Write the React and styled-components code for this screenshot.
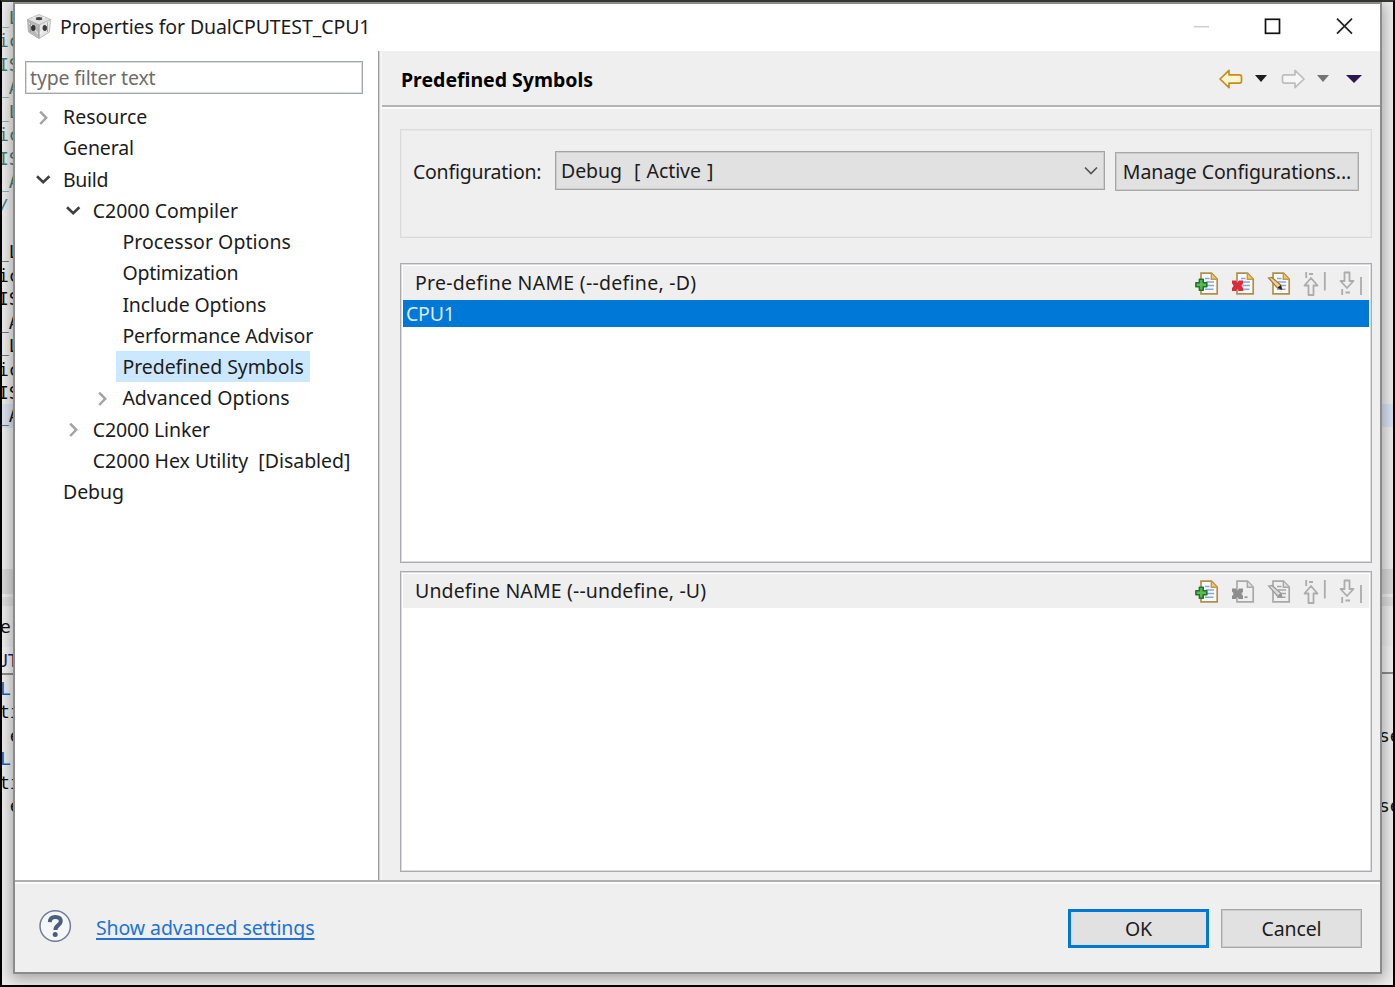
import React, { useState } from "react";
import styled, { createGlobalStyle } from "styled-components";

const GlobalStyle = createGlobalStyle`
  * {
    box-sizing: border-box;
  }
  body {
    margin: 0;
    overflow: hidden;
    font-family: "Noto Sans", "Open Sans", sans-serif;
    font-size: 19.5px;
    color: #1c1c1c;
  }
  button, input {
    font: inherit;
    color: inherit;
  }
`;

const Desktop = styled.div`
  width: 1395px;
  height: 987px;
  display: flex;
  border: 2px solid #000;
  border-top-color: #34352e;
  background: #eeeeee;
  overflow: hidden;
`;

/* Slices of the editor and console behind the dialog */
const Strip = styled.div`
  width: 11px;
  height: 983px;
  flex: none;
`;
const CodeLine = styled.div`
  height: ${(p) => p.$h || 23.45}px;
  line-height: ${(p) => p.$h || 23.45}px;
  width: 13px;
  overflow: hidden;
  white-space: pre;
  font-family: "DejaVu Sans Mono", monospace;
  font-size: 18px;
  font-weight: ${(p) => (p.$bold ? 700 : 400)};
  text-indent: ${(p) => p.$indent ?? -4}px;
  color: ${(p) => p.$color || "#111"};
  background: ${(p) => p.$bg || "transparent"};
  border-bottom: ${(p) => (p.$line ? "2px solid #8d8d8d" : "none")};
`;

const Dialog = styled.div`
  position: relative;
  width: 1369px;
  height: 972px;
  flex: none;
  display: flex;
  flex-direction: column;
  border: 2px solid #8b8b8b;
  background: #efefef;
  box-shadow: 0 3px 14px 2px rgba(0, 0, 0, 0.32);
`;

const TitleBar = styled.div`
  height: 47px;
  display: flex;
  align-items: center;
  padding: 0 27px 3px 12px;
  background: #fff;
`;
const Title = styled.div`
  flex: 1;
  margin-left: 9px;
  letter-spacing: -0.1px;
  white-space: nowrap;
`;
const Controls = styled.div`
  display: flex;
  gap: 55px;
  height: 17px;
`;

const Main = styled.div`
  display: flex;
  height: 829px;
`;
const Sidebar = styled.div`
  width: 365px;
  background: #fff;
  border-right: 1px solid #9c9c9c;
  box-shadow: 1px 0 0 #d2d2d2;
  padding: 10px 0 0 10px;
`;
const FilterInput = styled.input`
  display: block;
  width: 338px;
  height: 33px;
  padding: 0 4px;
  border: 1px solid #a4a6ad;
  box-shadow: inset 0 0 0 1px #dcdde0;
  outline: none;
  letter-spacing: -0.16px;
  &::placeholder {
    color: #6d6d6d;
    opacity: 1;
  }
`;
const Tree = styled.div`
  padding-top: 6.9px;
`;
const TreeRow = styled.div`
  height: 31.25px;
  display: flex;
  align-items: center;
  padding-left: ${(p) => 9 + p.$level * 29.7}px;
  cursor: default;
`;
const Twisty = styled.div`
  width: 18px;
  height: 18px;
  margin-right: 5px;
  display: flex;
`;
const TreeLabel = styled.div`
  height: 31px;
  line-height: 31px;
  padding: 0 6px;
  white-space: pre;
  letter-spacing: ${(p) => p.$ls || 0}px;
  background: ${(p) => (p.$selected ? "#cce8ff" : "transparent")};
`;

const Page = styled.div`
  flex: 1;
  margin-left: 2px;
  border-left: 1px solid #f8f8f8;
  display: flex;
  flex-direction: column;
`;
const PageHeader = styled.div`
  height: 56px;
  padding: 0 18px 0 18px;
  display: flex;
  align-items: center;
  justify-content: space-between;
  border-bottom: 2px solid #b4b4b4;
  box-shadow: 0 2px 0 #fbfbfb;
`;
const PageTitle = styled.div`
  font-weight: 700;
  color: #000;
  padding: 3px 0 0 1px;
`;
const NavTools = styled.div`
  display: flex;
  align-items: center;
  padding-top: 1px;
`;
const PageBody = styled.div`
  padding: 22px 8px 0 18px;
`;
const ConfigGroup = styled.div`
  height: 109px;
  padding: 21px 12px 0 12px;
  display: flex;
  align-items: flex-start;
  border: 1px solid #dadada;
  box-shadow: inset 0 0 0 1px #e9e9e9;
  margin-bottom: 25px;
`;
const ConfigLabel = styled.div`
  width: 142px;
  flex: none;
  line-height: 42px;
  white-space: nowrap;
  letter-spacing: -0.25px;
`;
const Combo = styled.div`
  width: 550px;
  flex: none;
  height: 39px;
  margin-right: 10px;
  padding: 0 5px 1px 5px;
  display: flex;
  align-items: center;
  justify-content: space-between;
  background: #e1e1e1;
  border: 1px solid #a4a4a4;
  box-shadow: inset 0 0 0 1px #cccccc;
  white-space: pre;
  word-spacing: 1.2px;
  letter-spacing: -0.1px;
`;
const Button = styled.button`
  width: ${(p) => p.$w}px;
  height: 39px;
  flex: none;
  padding: 0;
  margin-top: ${(p) => p.$mt || 0}px;
  background: #e1e1e1;
  border: ${(p) => (p.$primary ? "3px solid #0078d7" : "1px solid #a8a8a8")};
  box-shadow: ${(p) => (p.$primary ? "none" : "inset 0 0 0 1px #cbcbcb")};
  white-space: nowrap;
  letter-spacing: -0.12px;
`;

const ListBox = styled.div`
  height: ${(p) => p.$h}px;
  margin-bottom: 8px;
  padding: 2px;
  border: 1px solid #a9aab2;
  box-shadow: inset 0 0 0 1px #dcdce0;
  background: #fff;
`;
const ListHeader = styled.div`
  height: 34px;
  padding: 0 6px 0 12px;
  display: flex;
  align-items: center;
  justify-content: space-between;
  background: #efefef;
`;
const ListTitle = styled.div`
  margin-top: -2px;
  white-space: nowrap;
  letter-spacing: ${(p) => p.$ls || 0}px;
`;
const ListTools = styled.div`
  display: flex;
  align-items: center;
  gap: 12px;
`;
const ListItem = styled.div`
  height: 27px;
  line-height: 27px;
  padding-left: 3px;
  color: #dcebfa;
  background: #0078d7;
  letter-spacing: -0.2px;
`;

const Footer = styled.div`
  flex: 1;
  display: flex;
  align-items: center;
  padding: 0 18px 2px 24px;
  border-top: 2px solid #b0b0b0;
  box-shadow: inset 0 2px 0 #fbfbfb;
`;
const Link = styled.a`
  flex: 1;
  margin-left: 24px;
  padding-top: 3px;
  color: #1d74d4;
  text-decoration: underline;
  text-decoration-thickness: 2px;
  text-underline-offset: 3px;
  text-decoration-skip-ink: none;
  letter-spacing: -0.1px;
`;
const FooterButtons = styled.div`
  display: flex;
  gap: 12px;
  padding-top: 4px;
`;

const AppIcon = () => (
  <svg width="24" height="25" viewBox="0 0 24 25">
    <path d="M12 0.5 23.5 5.5 12 11 0.5 5.5z" fill="#e2e2e2" stroke="#c2c2c2" />
    <path d="M0.5 5.5 12 11V24.5L1.5 18z" fill="#b9b9b9" stroke="#b0b0b0" />
    <path d="M23.5 5.5 12 11V24.5L22.5 18z" fill="#e6e6e6" stroke="#bdbdbd" />
    <ellipse cx="12" cy="4.6" rx="3.6" ry="1.7" fill="#444" />
    <ellipse cx="6.3" cy="14" rx="2.2" ry="3" fill="#333" />
    <ellipse cx="17.8" cy="14" rx="2.2" ry="3" fill="#3c3c3c" />
    <path
      d="M6 3.2 9 4.8M18 3.2 15 4.8M2 9 5 12M8 16 11 20M22 9 19 12M16 16 13 20"
      fill="none"
      stroke="#fff"
      strokeOpacity="0.75"
      strokeWidth="1"
    />
    <path d="M12 11V24M3.5 8.5V18M20.5 8.5V18" stroke="#8f8f8f" strokeWidth="0.7" />
  </svg>
);

const Chevron = ({ open }) => (
  <svg width="18" height="18" viewBox="0 0 18 18" fill="none">
    {open ? (
      <path d="M3 6.3 9.2 12.2 15.4 6.3" stroke="#404040" strokeWidth="2.6" />
    ) : (
      <path d="M6.2 3.6 12.2 9.8 6.2 16" stroke="#a3a3a3" strokeWidth="2.5" />
    )}
  </svg>
);

const NavArrow = ({ back }) => (
  <svg width="24" height="20" viewBox="0 0 24 20">
    <path
      d={
        back
          ? "M1 10 10 1.3V5.8H20.5Q22.5 5.8 22.5 8V12Q22.5 14.2 20.5 14.2H10V18.7z"
          : "M23 10 14 1.3V5.8H3.5Q1.5 5.8 1.5 8V12Q1.5 14.2 3.5 14.2H14V18.7z"
      }
      fill={back ? "#fff6cf" : "#f6f6f6"}
      stroke={back ? "#c98a1e" : "#bdbdbd"}
      strokeWidth="1.7"
      strokeLinejoin="round"
    />
  </svg>
);

const Caret = styled.div`
  width: 0;
  height: 0;
  margin-left: ${(p) => p.$ml}px;
  margin-right: ${(p) => p.$mr || 0}px;
  border-left: ${(p) => p.$w || 6}px solid transparent;
  border-right: ${(p) => p.$w || 6}px solid transparent;
  border-top: ${(p) => p.$h || 7}px solid ${(p) => p.$color};
`;

/* Document page shared by the add, delete and edit icons */
const Paper = ({ disabled, dots }) => (
  <>
    <path
      d="M6 1.2H16.5L22.2 7V21.8H6z"
      fill={disabled ? "#f0f0f0" : "#f7fafe"}
      stroke={disabled ? "#a9a9a9" : "#b39048"}
      strokeWidth="1.7"
    />
    <path
      d="M16.3 1.5V7.2H22"
      fill={disabled ? "#dcdcdc" : "#e9c978"}
      stroke={disabled ? "#a9a9a9" : "#c79c3c"}
      strokeWidth="1.4"
    />
    {!dots && (
      <path
        d="M10 6.5H14.5M11 10H19M12 13.5H19M10 17.3H18.5"
        stroke={disabled ? "#a5a5a5" : "#8ba6d6"}
        strokeWidth="1.5"
      />
    )}
  </>
);

const AddIcon = () => (
  <svg width="24" height="23" viewBox="0 0 24 23">
    <Paper />
    <path
      d="M4.4 7.2H8.2V10.8H11.8V14.8H8.2V18.3H4.4V14.8H0.9V10.8H4.4z"
      fill="#5dba4b"
      stroke="#1f7430"
      strokeWidth="1.6"
      strokeLinejoin="round"
    />
  </svg>
);
const DeleteIcon = ({ disabled }) => (
  <svg width="24" height="23" viewBox="0 0 24 23">
    <Paper disabled={disabled} dots={disabled} />
    <rect x="2" y="9" width="9.5" height="10" fill={disabled ? "#c4c4c4" : "#e88a92"} />
    <path
      d="M1 8.5H5L6.5 10.8 8 8.5H12V11.5L10 13.7 12 16V19H8L6.5 16.8 5 19H1V16L3 13.7 1 11.5z"
      fill={disabled ? "#8d8d8d" : "#d92b3c"}
    />
    {disabled && <path d="M13.5 17.2H16.5" stroke="#999" strokeWidth="1.8" />}
  </svg>
);
const EditIcon = ({ disabled }) => (
  <svg width="24" height="23" viewBox="0 0 24 23">
    <Paper disabled={disabled} />
    <path
      d="M1.5 6 5 5.5 14 13.2 14.8 17.2 10.6 16.2z"
      fill={disabled ? "#d8d8d8" : "#f3cf8c"}
      stroke={disabled ? "#999" : "#a0763a"}
      strokeWidth="1.2"
    />
    <path d="M10.5 15.5 15 18 13.8 13z" fill={disabled ? "#999" : "#222"} />
  </svg>
);
const MoveIcon = ({ down }) => (
  <svg width="24" height="25" viewBox="0 0 24 25" fill="none" stroke="#acacac" strokeWidth="1.8">
    {down ? (
      <>
        <path d="M5.5 1.5H10.5V10H14.5L8 17 1.5 10H5.5z" strokeLinejoin="round" />
        <path d="M3.2 18V24M6.5 21.5H11M22 6V24" />
      </>
    ) : (
      <>
        <path d="M5.5 24H10.5V14.5H14.5L8 7 1.5 14.5H5.5z" strokeLinejoin="round" />
        <path d="M3.2 1V7M6 3H10M21.8 1V19.5" />
      </>
    )}
  </svg>
);

const HelpIcon = () => (
  <svg width="33" height="33" viewBox="0 0 33 33" fill="none">
    <circle cx="16.2" cy="16" r="15.2" fill="#f5f6f8" stroke="#6f7d96" strokeWidth="1.5" />
    <path
      d="M10.8 12.1C11 8.3 13.3 6.9 16.2 6.9C19.7 6.9 21.8 8.5 21.8 11.3C21.8 15.1 16.4 15.3 16.4 19.9"
      stroke="#4c5d7e"
      strokeWidth="4"
    />
    <circle cx="16.2" cy="24.5" r="2.5" fill="#4c5d7e" />
  </svg>
);

const TREE = [
  { label: "Resource", level: 0, twisty: "closed" },
  { label: "General", level: 0, ls: -0.15 },
  { label: "Build", level: 0, twisty: "open", ls: -0.35 },
  { label: "C2000 Compiler", level: 1, twisty: "open" },
  { label: "Processor Options", level: 2, ls: 0.05 },
  { label: "Optimization", level: 2, ls: -0.22 },
  { label: "Include Options", level: 2, ls: -0.13 },
  { label: "Performance Advisor", level: 2, ls: -0.1 },
  { label: "Predefined Symbols", level: 2, ls: -0.05 },
  { label: "Advanced Options", level: 2, twisty: "closed" },
  { label: "C2000 Linker", level: 1, twisty: "closed", ls: -0.12 },
  { label: "C2000 Hex Utility  [Disabled]", level: 1, ls: -0.02 },
  { label: "Debug", level: 0, ls: -0.1 },
];

const CODE = ["_L", "ic", "IS", "_A", "_L", "ic", "IS", "_A"];

const LOG = [
  { text: "L", color: "#1565b5", indent: -2 },
  { text: "ti", indent: -3 },
  { text: " e", indent: -3 },
];

const EditorLeft = () => (
  <Strip>
    <CodeLine $h={4} />
    {CODE.map((t, i) => (
      <CodeLine key={i} $color="#3f7f6f">
        {t}
      </CodeLine>
    ))}
    <CodeLine $color="#3a8a9a" $indent={-4}>/</CodeLine>
    <CodeLine />
    {CODE.map((t, i) => (
      <CodeLine key={i} $bg={i === 7 ? "#dbe4f2" : undefined}>
        {t}
      </CodeLine>
    ))}
    <CodeLine $h={141} />
    <CodeLine $h={25} $bg="#dadada" />
    <CodeLine $h={3} />
    <CodeLine $h={9} $bg="#e0e0e0" />
    <CodeLine $h={41} $indent={-2}>er</CodeLine>
    <CodeLine $h={28} $indent={-5} $color="#1c2a66" $bg="#f4f4f4" $line>UT</CodeLine>
    <CodeLine $h={2} />
    {[...LOG, ...LOG].map((line, i) => (
      <CodeLine key={i} $color={line.color} $indent={line.indent}>
        {line.text}
      </CodeLine>
    ))}
  </Strip>
);

const EditorRight = () => (
  <Strip>
    <CodeLine $h={402} />
    <CodeLine $bg="#d9e3f4" />
    <CodeLine $h={141.5} />
    <CodeLine $h={25} $bg="#dadada" />
    <CodeLine $h={3} />
    <CodeLine $h={9} $bg="#dedede" />
    <CodeLine $h={40} />
    <CodeLine $h={28} $bg="#f4f4f4" $line />
    <CodeLine $h={50} />
    <CodeLine $indent={-3}>se</CodeLine>
    <CodeLine $h={47} />
    <CodeLine $indent={-3}>se</CodeLine>
  </Strip>
);

const Tools = ({ disabled }) => (
  <ListTools>
    <AddIcon />
    <DeleteIcon disabled={disabled} />
    <EditIcon disabled={disabled} />
    <MoveIcon />
    <MoveIcon down />
  </ListTools>
);

const App = () => {
  const [selected, setSelected] = useState("Predefined Symbols");

  return (
    <>
      <GlobalStyle />
      <Desktop>
        <EditorLeft />
        <Dialog>
          <TitleBar>
            <AppIcon />
            <Title>Properties for DualCPUTEST_CPU1</Title>
            <Controls>
              <svg width="17" height="17" viewBox="0 0 17 17">
                <path d="M2 8.7H17" stroke="#cfcfcf" strokeWidth="1.5" />
              </svg>
              <svg width="17" height="17" viewBox="0 0 17 17">
                <rect x="1.5" y="1.3" width="14" height="14" fill="none" stroke="#111" strokeWidth="1.7" />
              </svg>
              <svg width="17" height="17" viewBox="0 0 17 17">
                <path d="M1 0.6 16 15.6M16 0.6 1 15.6" stroke="#222" strokeWidth="1.7" />
              </svg>
            </Controls>
          </TitleBar>

          <Main>
            <Sidebar>
              <FilterInput placeholder="type filter text" />
              <Tree>
                {TREE.map((item) => (
                  <TreeRow key={item.label} $level={item.level}>
                    <Twisty>
                      {item.twisty && <Chevron open={item.twisty === "open"} />}
                    </Twisty>
                    <TreeLabel
                      $ls={item.ls}
                      $selected={item.label === selected}
                      onClick={() => setSelected(item.label)}
                    >
                      {item.label}
                    </TreeLabel>
                  </TreeRow>
                ))}
              </Tree>
            </Sidebar>

            <Page>
              <PageHeader>
                <PageTitle>Predefined Symbols</PageTitle>
                <NavTools>
                  <NavArrow back />
                  <Caret $ml={12} $mr={14} $color="#1e1e1e" />
                  <NavArrow />
                  <Caret $ml={12} $mr={16} $color="#747474" />
                  <Caret $ml={1} $w={8} $h={8} $color="#2b1650" />
                </NavTools>
              </PageHeader>
              <PageBody>
                <ConfigGroup>
                  <ConfigLabel>Configuration:</ConfigLabel>
                  <Combo>
                    Debug  [ Active ]
                    <svg width="16" height="16" viewBox="0 0 16 16">
                      <path d="M2 5.5 8 11.5 14 5.5" fill="none" stroke="#555" strokeWidth="1.7" />
                    </svg>
                  </Combo>
                  <Button $w={244} $mt={1}>
                    Manage Configurations...
                  </Button>
                </ConfigGroup>

                <ListBox $h={300}>
                  <ListHeader>
                    <ListTitle $ls={0.27}>Pre-define NAME (--define, -D)</ListTitle>
                    <Tools />
                  </ListHeader>
                  <ListItem>CPU1</ListItem>
                </ListBox>
                <ListBox $h={301}>
                  <ListHeader>
                    <ListTitle $ls={0.14}>Undefine NAME (--undefine, -U)</ListTitle>
                    <Tools disabled />
                  </ListHeader>
                </ListBox>
              </PageBody>
            </Page>
          </Main>

          <Footer>
            <HelpIcon />
            <Link>Show advanced settings</Link>
            <FooterButtons>
              <Button $w={141} $primary>
                OK
              </Button>
              <Button $w={141}>Cancel</Button>
            </FooterButtons>
          </Footer>
        </Dialog>
        <EditorRight />
      </Desktop>
    </>
  );
};

export default App;
